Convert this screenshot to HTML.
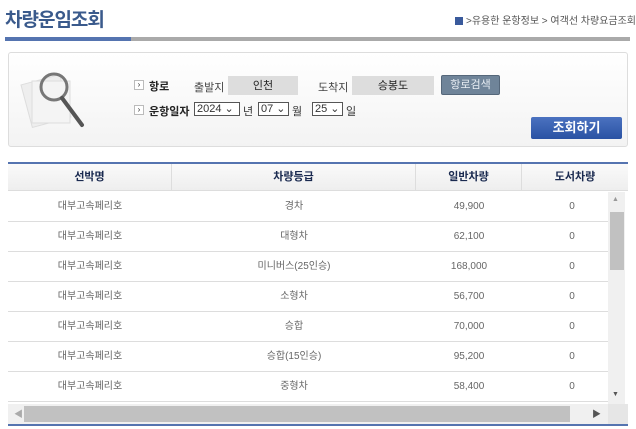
<!DOCTYPE html>
<html><head><meta charset="utf-8"><style>
*{margin:0;padding:0;box-sizing:border-box}
body{width:636px;height:429px;background:#fff;font-family:"Liberation Sans","Noto Sans CJK KR",sans-serif;position:relative;overflow:hidden;font-size:11px;color:#333}
.a{position:absolute}
.title{left:5px;top:5px;font-size:19px;font-weight:bold;color:#3a5a8c;letter-spacing:-1px}
.bc{right:0;top:12px;font-size:10px;color:#555;white-space:nowrap}
.box{left:8px;top:52px;width:620px;height:95px;border:1px solid #ddd;border-radius:3px;background:linear-gradient(#fff,#f3f3f3)}
.lbl{font-size:11px;font-weight:bold;color:#222}
.arr{width:10px;height:10px;border:1px solid #bbb;background:#fff;font-size:8px;line-height:8px;text-align:center}
.fld{background:#ddd;height:19px;line-height:20px;text-align:center;font-size:11px;color:#222}
.sel{height:14px;border:1px solid #555;background:#fff;font-size:11px;line-height:12px;padding-left:2px}
.hdr{left:8px;top:162px;width:620px;height:29px;border-top:2px solid #5574b0;background:linear-gradient(#fafafa,#eee);border-bottom:1px solid #ddd}
.hc{position:absolute;top:0;height:27px;line-height:27px;text-align:center;font-weight:bold;color:#1a2a50;font-size:11px}
.row{position:absolute;left:8px;width:600px;height:30px;border-bottom:1px solid #ddd;color:#666;font-size:10px}
.row span{position:absolute;top:0;line-height:30px;text-align:center}
</style></head><body>
<div class="a title">차량운임조회</div>
<div class="a bc"><span style="display:inline-block;width:8px;height:8px;background:#3a5a9c;vertical-align:middle;margin-right:3px"></span>&gt;유용한 운항정보 &gt; 여객선 차량요금조회</div>
<div class="a" style="left:5px;top:37px;width:126px;height:4px;background:#5574b0"></div>
<div class="a" style="left:131px;top:37px;width:499px;height:4px;background:#aaa"></div>
<div class="a box"></div>
<svg class="a" style="left:20px;top:65px" width="70" height="65"><rect x="6" y="14" width="40" height="44" fill="#eee" stroke="#ddd" transform="rotate(-15 26 36)"/><rect x="12" y="16" width="38" height="42" fill="#f4f4f4" stroke="#ddd"/><circle cx="34" cy="22" r="13" fill="none" stroke="#777" stroke-width="3"/><line x1="42" y1="33" x2="62" y2="60" stroke="#555" stroke-width="4" stroke-linecap="round"/></svg>
<div class="a arr" style="left:134px;top:80px">›</div>
<div class="a lbl" style="left:149px;top:78px">항로</div>
<div class="a" style="left:194px;top:79px;color:#444">출발지</div>
<div class="a fld" style="left:228px;top:76px;width:70px">인천</div>
<div class="a" style="left:318px;top:79px;color:#444">도착지</div>
<div class="a fld" style="left:352px;top:76px;width:82px">승봉도</div>
<div class="a" style="left:441px;top:75px;width:59px;height:20px;background:#6f8499;border:1px solid #55677a;border-radius:2px;color:#e8eef4;text-align:center;line-height:18px;font-size:11px">항로검색</div>
<div class="a arr" style="left:134px;top:105px">›</div>
<div class="a lbl" style="left:149px;top:103px">운항일자</div>
<div class="a sel" style="left:194px;top:102px;width:46px">2024 ⌄</div>
<div class="a" style="left:243px;top:103px">년</div>
<div class="a sel" style="left:258px;top:102px;width:31px">07 ⌄</div>
<div class="a" style="left:292px;top:103px">월</div>
<div class="a sel" style="left:312px;top:102px;width:31px">25 ⌄</div>
<div class="a" style="left:346px;top:103px">일</div>
<div class="a" style="left:531px;top:117px;width:91px;height:22px;background:linear-gradient(#4b72c0,#2a52a3);border-radius:2px;color:#fff;font-weight:bold;font-size:13px;text-align:center;line-height:22px">조회하기</div>
<div class="a hdr">
<div class="hc" style="left:0;width:164px;border-right:1px solid #ddd">선박명</div>
<div class="hc" style="left:164px;width:244px;border-right:1px solid #ddd">차량등급</div>
<div class="hc" style="left:408px;width:106px;border-right:1px solid #ddd">일반차량</div>
<div class="hc" style="left:514px;width:106px">도서차량</div>
</div>
<div class="a" style="left:8px;top:192px;width:620px;height:212px;overflow:hidden">
<div class="row" style="left:0;top:0"><span style="left:0;width:164px">대부고속페리호</span><span style="left:164px;width:244px">경차</span><span style="left:408px;width:106px">49,900</span><span style="left:514px;width:100px">0</span></div>
<div class="row" style="left:0;top:30px"><span style="left:0;width:164px">대부고속페리호</span><span style="left:164px;width:244px">대형차</span><span style="left:408px;width:106px">62,100</span><span style="left:514px;width:100px">0</span></div>
<div class="row" style="left:0;top:60px"><span style="left:0;width:164px">대부고속페리호</span><span style="left:164px;width:244px">미니버스(25인승)</span><span style="left:408px;width:106px">168,000</span><span style="left:514px;width:100px">0</span></div>
<div class="row" style="left:0;top:90px"><span style="left:0;width:164px">대부고속페리호</span><span style="left:164px;width:244px">소형차</span><span style="left:408px;width:106px">56,700</span><span style="left:514px;width:100px">0</span></div>
<div class="row" style="left:0;top:120px"><span style="left:0;width:164px">대부고속페리호</span><span style="left:164px;width:244px">승합</span><span style="left:408px;width:106px">70,000</span><span style="left:514px;width:100px">0</span></div>
<div class="row" style="left:0;top:150px"><span style="left:0;width:164px">대부고속페리호</span><span style="left:164px;width:244px">승합(15인승)</span><span style="left:408px;width:106px">95,200</span><span style="left:514px;width:100px">0</span></div>
<div class="row" style="left:0;top:180px"><span style="left:0;width:164px">대부고속페리호</span><span style="left:164px;width:244px">중형차</span><span style="left:408px;width:106px">58,400</span><span style="left:514px;width:100px">0</span></div>
</div>
<div class="a" style="left:608px;top:192px;width:17px;height:212px;background:#f0f0f0"></div>
<div class="a" style="left:610px;top:212px;width:14px;height:58px;background:#c1c1c1"></div>
<div class="a" style="left:612px;top:196px;font-size:7px;color:#999">▲</div>
<div class="a" style="left:612px;top:391px;font-size:7px;color:#555">▼</div>
<div class="a" style="left:8px;top:404px;width:600px;height:20px;background:#f0f0f0"></div>
<div class="a" style="left:608px;top:404px;width:20px;height:20px;background:#e6e6e6"></div>
<div class="a" style="left:24px;top:406px;width:546px;height:16px;background:#c1c1c1"></div>
<div class="a" style="left:14px;top:407px;font-size:9px;color:#aaa">◀</div>
<div class="a" style="left:592px;top:407px;font-size:9px;color:#555">▶</div>
<div class="a" style="left:8px;top:424px;width:620px;height:2px;background:#5574b0"></div>
</body></html>
